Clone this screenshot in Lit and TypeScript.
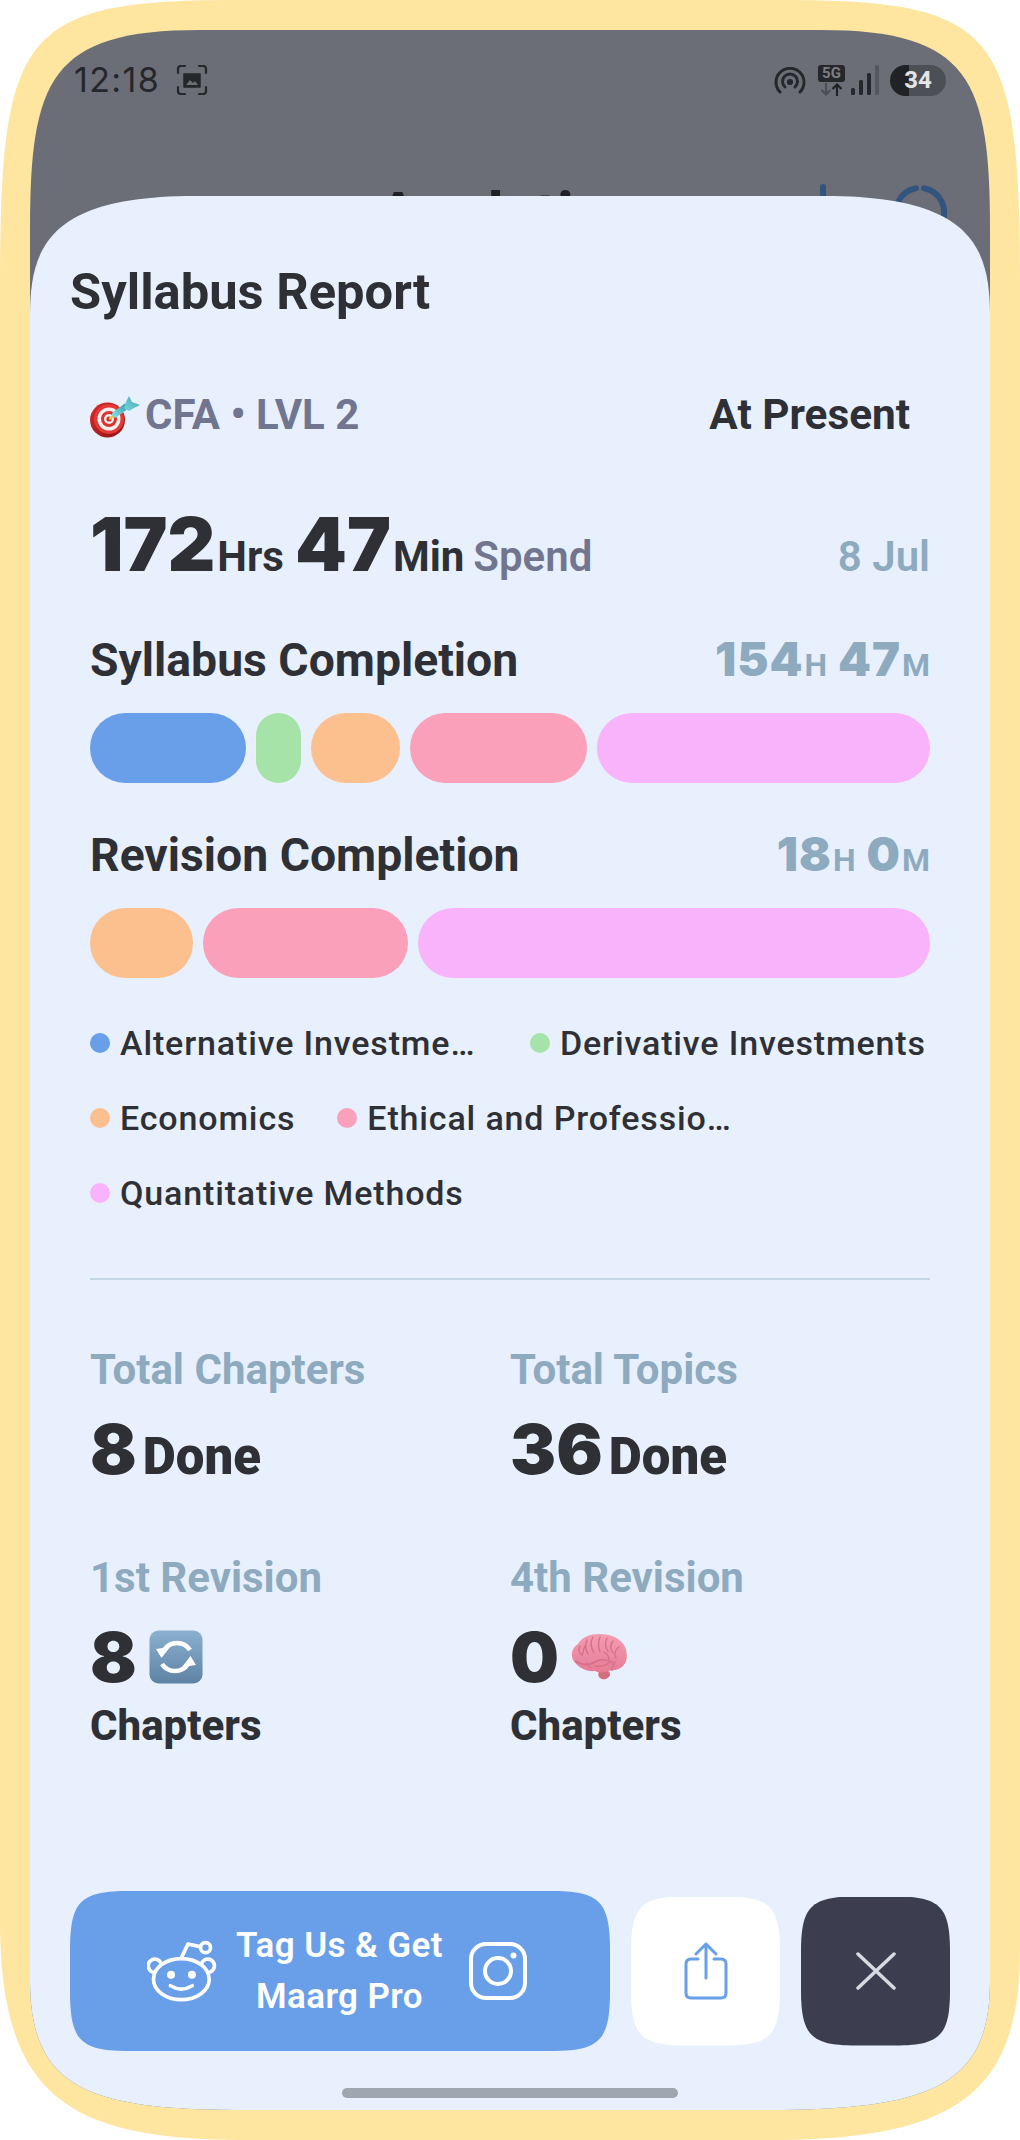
import { LitElement, html, css, svg } from 'lit';
import { customElement } from 'lit/decorators.js';
import { classMap } from 'lit/directives/class-map.js';

const syllabus = [
    { w: 156, c: '#699ee8' },
    { w: 45, c: '#a6e3a9' },
    { w: 89, c: '#fcc08f' },
    { w: 178, c: '#fba0ba' },
    { w: 333, c: '#f8b3fb' },
];

const revision = [
    { w: 103, c: '#fcc08f' },
    { w: 205, c: '#fba0ba' },
    { w: 512, c: '#f8b3fb' },
];

const legend = [
    { c: '#699ee8', t: 'Alternative Investme…', cut: true },
    { c: '#a6e3a9', t: 'Derivative Investments', cut: false },
    { c: '#fcc08f', t: 'Economics', cut: false },
    { c: '#fba0ba', t: 'Ethical and Professio…', cut: true },
    { c: '#f8b3fb', t: 'Quantitative Methods', cut: false },
];

const target = svg`<svg class="target" viewBox="0 0 52 44">
    <defs>
        <linearGradient id="rim" x1="0" y1="0" x2="1" y2="1"><stop offset="0" stop-color="#d92b2b"/><stop offset="1" stop-color="#8f1414"/></linearGradient>
        <linearGradient id="fin" x1="0" y1="1" x2="1" y2="0"><stop offset="0" stop-color="#7fd6dc"/><stop offset="1" stop-color="#3aa5b3"/></linearGradient>
    </defs>
    <ellipse cx="18.5" cy="25" rx="17.5" ry="17.5" fill="url(#rim)"/>
    <ellipse cx="20" cy="24" rx="15" ry="15" fill="#e23a36"/>
    <ellipse cx="20" cy="24" rx="11.5" ry="11.5" fill="#fbeeee"/>
    <ellipse cx="20" cy="24" rx="8" ry="8" fill="#dc3330"/>
    <ellipse cx="20" cy="24" rx="5" ry="5" fill="#fbeeee"/>
    <ellipse cx="20" cy="24" rx="2.6" ry="2.6" fill="#d22c2a"/>
    <path d="M21 23.5l5-4" stroke="#e9c84a" stroke-width="2.4" stroke-linecap="round"/>
    <path d="M26 19.500l11-8" stroke="url(#fin)" stroke-width="6" stroke-linecap="round"/>
    <path d="M35 13l2-6 3-6 3 6 8 3-6 3-5 3z" fill="url(#fin)"/>
</svg>`;

const repeat = svg`<svg class="emoji-repeat" viewBox="0 0 54 54">
    <defs>
        <linearGradient id="tile" x1="0" y1="0" x2="0" y2="1"><stop offset="0" stop-color="#8bb0d0"/><stop offset="1" stop-color="#5e82a3"/></linearGradient>
    </defs>
    <rect x=".5" y=".5" width="53" height="53" rx="9" fill="url(#tile)"/>
    <path d="M15 20A15.500 15.500 0 0 1 41 20" fill="none" stroke="#fff" stroke-width="4.500"/>
    <path d="M39 34A15.500 15.500 0 0 1 13 34" fill="none" stroke="#fff" stroke-width="4.500"/>
    <path d="M7 19l14-2-8.500 11z" fill="#fff"/>
    <path d="M47 35l-14 2 8.500-11z" fill="#fff"/>
</svg>`;

const brain = svg`<svg class="emoji-brain" viewBox="0 0 56 46">
    <defs>
        <linearGradient id="pink" x1="0" y1="0" x2="0" y2="1"><stop offset="0" stop-color="#f59db0"/><stop offset="1" stop-color="#e57c95"/></linearGradient>
    </defs>
    <path d="M30 36c4 0 9 0 9 4 0 4-5 6-8 5-3-1-5-4-3-7z" fill="#d0707f"/>
    <path d="M2 26C-1 20 2 13 7 10 11 3 19 0 28 0c10 0 20 3 25 11 4 8 4 16-1 21-5 5-11 4-15 5-5 2-9 2-13 0-8 1-17-3-22-11z" fill="url(#pink)"/>
    <path d="M4 27c8 5 15 4 20 1 5-3 12-3 18 1" fill="none" stroke="#d8708a" stroke-width="1.800"/>
    <path d="M9 12c-2 4-1 7 2 9 2-3 1-6 3-9M16 6c-2 5-2 9 1 14M22 3c-3 5-2 11 1 16M29 3c-2 5-2 10 0 15M36 4c-2 4-2 9 1 13M42 7c-3 4-3 8 0 12M48 13c-4 3-5 7-3 11M33 18c3 2 5 4 5 7M24 32c5 1 10 0 14-3M44 28c-2 3-3 5-3 8M15 29c1 2 2 4 5 5" fill="none" stroke="#d8708a" stroke-width="1.400" stroke-linecap="round"/>
</svg>`;

@customElement('app-root')
export class AppRoot extends LitElement {
    bar(items: { w: number; c: string }[]) {
        return html`<div class="bar">
            ${items.map(i => html`<span class="seg" style="flex:${i.w} 1 0;background:${i.c}"></span>`)}
        </div>`;
    }

    statusBar() {
        return html`<div class="status">
            <div class="status-left">
                <span class="time">12:18</span>
                <svg class="shot" viewBox="0 0 32 30" fill="none" stroke="#25272b" stroke-width="2.2" stroke-linecap="round">
                    <path d="M2 8V4q0-3 3-3h4M23 1h4q3 0 3 3v4M30 22v4q0 3-3 3h-4M9 29H5q-3 0-3-3v-4"/>
                    <path d="M8 9h16v13H8z" fill="#25272b" stroke-width="1.5" stroke-linejoin="round"/>
                    <path d="M10 20l4-5 3 3 2-2 3 4z" fill="#6b6e76" stroke="none"/>
                </svg>
            </div>
            <div class="status-right">
                <svg class="hotspot" viewBox="0 0 32 27" fill="none" stroke="#25272b" stroke-width="3" stroke-linecap="round">
                    <path d="M6 25A14 14 0 1 1 26 25"/>
                    <path d="M11 20A7.5 7.5 0 1 1 21 20"/>
                    <circle cx="16" cy="15" r="1.6" fill="#25272b"/>
                </svg>
                <div class="net">
                    <span class="badge">5G</span>
                    <svg class="arrows" viewBox="0 0 27 13" fill="none" stroke-width="2.2">
                        <path d="M8 0v11M3.5 7L8 11.5 12.500 7" stroke="#4b4e54"/>
                        <path d="M19 13V2M14.500 6L19 1.500 23.500 6" stroke="#202225"/>
                    </svg>
                </div>
                <svg class="signal" viewBox="0 0 28 30">
                    <rect x="0" y="23" width="4" height="7" rx="1.500" fill="#25272b"/>
                    <rect x="8" y="15" width="4" height="15" rx="1.500" fill="#25272b"/>
                    <rect x="16" y="8" width="4" height="22" rx="1.500" fill="#25272b"/>
                    <rect x="24" y="0" width="4" height="30" rx="1.500" fill="#54575d"/>
                </svg>
                <div class="battery"><span>34</span></div>
            </div>
        </div>`;
    }

    render() {
        return html`
            <div class="frame">
                <div class="screen">
                    ${this.statusBar()}
                    <div class="behind">
                        <span class="behind-title">Analytics</span>
                        <span class="behind-line"></span>
                        <svg class="behind-ring" viewBox="0 0 60 60" fill="none" stroke="#33547f" stroke-width="6" stroke-linecap="round">
                            <path d="M34 6.300A24 24 0 1 1 26 6.300"/>
                        </svg>
                    </div>

                    <div class="sheet">
                        <h1 class="title">Syllabus Report</h1>

                        <div class="row course">
                            <div class="course-name">${target}<span>CFA • LVL 2</span></div>
                            <span class="present">At Present</span>
                        </div>

                        <div class="row spend">
                            <div class="spend-time">
                                <b class="big">172</b><b class="unit">Hrs</b>
                                <b class="big gap">47</b><b class="unit">Min</b>
                                <span class="spend-word">Spend</span>
                            </div>
                            <span class="date">8 Jul</span>
                        </div>

                        <div class="row heading first">
                            <h2>Syllabus Completion</h2>
                            <div class="sum"><b>154</b><i>H</i><b class="gap">47</b><i>M</i></div>
                        </div>
                        ${this.bar(syllabus)}

                        <div class="row heading second">
                            <h2>Revision Completion</h2>
                            <div class="sum"><b>18</b><i>H</i><b class="gap">0</b><i>M</i></div>
                        </div>
                        ${this.bar(revision)}

                        <div class="legend">
                            ${legend.map(l => html`<div class="legend-item">
                                <span class="dot" style="background:${l.c}"></span>
                                <span class=${classMap({ 'legend-text': true, cut: l.cut })}>${l.t}</span>
                            </div>`)}
                        </div>

                        <div class="divider"></div>

                        <div class="stats">
                            <div class="stat">
                                <div class="stat-label">Total Chapters</div>
                                <div class="stat-value"><b>8</b><span>Done</span></div>
                            </div>
                            <div class="stat">
                                <div class="stat-label">Total Topics</div>
                                <div class="stat-value"><b>36</b><span>Done</span></div>
                            </div>
                            <div class="stat">
                                <div class="stat-label">1st Revision</div>
                                <div class="stat-value"><b>8</b>${repeat}</div>
                                <div class="stat-sub">Chapters</div>
                            </div>
                            <div class="stat">
                                <div class="stat-label">4th Revision</div>
                                <div class="stat-value"><b>0</b>${brain}</div>
                                <div class="stat-sub">Chapters</div>
                            </div>
                        </div>

                        <div class="footer">
                            <div class="btn tag">
                                <svg class="reddit" viewBox="50 60 210 190" fill="none" stroke="#fff" stroke-width="11" stroke-linecap="round" stroke-linejoin="round">
                                    <ellipse cx="153" cy="178" rx="84" ry="62"/>
                                    <path d="M92 131a20 20 0 1 0-27 25"/>
                                    <path d="M214 131a20 20 0 1 1 27 25"/>
                                    <circle cx="122" cy="165" r="12" fill="#fff" stroke="none"/>
                                    <circle cx="185" cy="165" r="12" fill="#fff" stroke="none"/>
                                    <path d="M120 198q33 20 66 0"/>
                                    <path d="M153 114l20-42 36 8"/>
                                    <circle cx="226" cy="83" r="15"/>
                                </svg>
                                <div class="tag-text">Tag Us &amp; Get<br>Maarg Pro</div>
                                <svg class="insta" viewBox="0 0 58 58" fill="none" stroke="#fff" stroke-width="4">
                                    <rect x="2" y="2" width="54" height="54" rx="15"/>
                                    <circle cx="29" cy="29" r="13"/>
                                    <circle cx="44.500" cy="13.500" r="3" fill="#fff" stroke="none"/>
                                </svg>
                            </div>
                            <div class="btn square white">
                                <svg class="share" viewBox="0 0 44 58" fill="none" stroke="#699ee8" stroke-width="3" stroke-linecap="round" stroke-linejoin="round">
                                    <path d="M22 2v34M12 12L22 2l10 10"/>
                                    <path d="M14 17H7q-5 0-5 5v29q0 5 5 5h30q5 0 5-5V22q0-5-5-5h-7"/>
                                </svg>
                            </div>
                            <div class="btn square dark">
                                <svg class="close" viewBox="0 0 40 38" fill="none" stroke="#d6dbe2" stroke-width="3.500" stroke-linecap="round">
                                    <path d="M2 2l36 34M38 2L2 36"/>
                                </svg>
                            </div>
                        </div>
                        <div class="home"></div>
                    </div>
                </div>
            </div>
        `;
    }

    static styles = css`
        :host {
            display: block;
            width: 1020px;
            height: 2140px;
            background: #fff;
            font-family: Roboto, "Noto Sans", sans-serif;
            color: #2e3035;
        }

        h1, h2 { margin: 0; }
        b { font-weight: inherit; }
        i { font-style: normal; }

        /* the phone corners are squircles, border-radius can't do them */
        .frame {
            box-sizing: border-box;
            height: 100%;
            padding: 30px;
            background: #fee6a0;
            clip-path: path('M0 290C0 30 20 0 240 0H780C1000 0 1020 30 1020 290V1950C1020 2090 960 2140 770 2140H250C70 2140 0 2100 0 1920Z');
        }

        .screen {
            position: relative;
            height: 100%;
            overflow: hidden;
            background: #6b6e76;
            clip-path: path('M0 200C0 50 20 0 170 0H790C940 0 960 50 960 200V1950C960 2050 910 2080 740 2080H216C60 2080 0 2060 0 1950Z');
        }

        /* status bar */
        .status {
            display: flex;
            justify-content: space-between;
            align-items: center;
            height: 32px;
            padding: 34px 44px 0 44px;
            color: #25272b;
        }

        .status-left, .status-right { display: flex; align-items: center; }
        .time { font-family: Inter, sans-serif; font-size: 34px; line-height: 32px; letter-spacing: 1.4px; }
        .shot { width: 32px; height: 30px; margin-left: 16px; }
        .hotspot { width: 32px; height: 27px; }
        .net { display: flex; flex-direction: column; align-items: center; margin-left: 12px; }
        .badge {
            width: 27px;
            height: 17px;
            border-radius: 3px;
            background: #25272b;
            color: #7b7e85;
            font-size: 15px;
            font-weight: 700;
            line-height: 17px;
            text-align: center;
        }
        .arrows { width: 27px; height: 13px; margin-top: 1px; }
        .signal { width: 28px; height: 30px; margin-left: 6px; }
        .battery {
            width: 56px;
            height: 31px;
            margin-left: 11px;
            border-radius: 16px;
            background: linear-gradient(90deg, #202225 0 19px, #4c4f55 19px);
            color: #e4e5e7;
            font-size: 24px;
            font-weight: 700;
            line-height: 31px;
            text-align: center;
        }

        /* page behind the sheet */
        .behind { position: relative; height: 80px; margin-top: 85px; }
        .behind-title {
            position: absolute;
            left: 347px;
            top: -1px;
            color: #1f2024;
            font-size: 63px;
            font-weight: 700;
            line-height: 72px;
        }
        .behind-line { position: absolute; left: 790px; top: 3px; width: 6px; height: 40px; border-radius: 3px; background: #33547f; }
        .behind-ring { position: absolute; left: 860px; top: 1px; width: 60px; height: 60px; }

        /* sheet */
        .sheet {
            position: absolute;
            inset: 166px 0 0 0;
            display: flex;
            flex-direction: column;
            box-sizing: border-box;
            padding: 0 60px;
            background: #e8f0fd;
            clip-path: path('M0 120C0 50 20 0 165 0H795C940 0 960 50 960 120V1914H0Z');
        }

        .title { margin: 66px 0 0 -20px; font-size: 50.700px; font-weight: 700; line-height: 60px; }
        .row { display: flex; justify-content: space-between; align-items: baseline; }

        .course { margin-top: 62px; align-items: center; height: 60px; padding-right: 20px; }
        .course-name { display: flex; align-items: center; color: #71758f; font-size: 42px; font-weight: 700; }
        .target { width: 52px; height: 44px; margin: 6px 4px 0 -1px; }
        .present { font-size: 42.300px; font-weight: 700; }

        .spend { margin-top: 60px; height: 80px; }
        .spend-time { display: flex; align-items: baseline; }
        .big { font-family: Inter, sans-serif; font-size: 74px; font-weight: 900; line-height: 80px; }
        .unit { margin-left: 2px; font-size: 42px; font-weight: 700; }
        .big.gap { margin-left: 11px; }
        .spend-word { margin-left: 9px; color: #71758f; font-size: 42px; font-weight: 600; }
        .date { color: #8eaabf; font-size: 42px; font-weight: 600; }

        .heading { height: 60px; }
        .heading.first { margin-top: 46px; }
        .heading.second { margin-top: 42px; }
        h2 { font-size: 46.300px; font-weight: 700; line-height: 60px; }
        .sum { display: flex; align-items: baseline; color: #8eaabf; }
        .sum b { font-family: Inter, sans-serif; font-size: 47px; font-weight: 900; letter-spacing: 1px; }
        .sum b.gap { margin-left: 11px; }
        .sum i { margin-left: 1px; font-size: 32px; font-weight: 700; }

        .bar { display: flex; gap: 10px; height: 70px; margin-top: 23px; }
        .seg { border-radius: 35px; min-width: 0; }

        .legend { display: flex; flex-wrap: wrap; gap: 35px 42px; margin-top: 45px; }
        .legend-item { display: flex; align-items: center; height: 40px; }
        .dot { flex: none; width: 20px; height: 20px; border-radius: 50%; margin-right: 10px; }
        .legend-text {
            font-size: 34px;
            font-weight: 500;
            letter-spacing: .85px;
            white-space: nowrap;
        }
        .legend-text.cut { width: 368px; }

        .divider { height: 2px; margin-top: 65px; background: #c5d5e8; }

        .stats { display: grid; grid-template-columns: 420px 1fr; row-gap: 69px; margin-top: 65px; }
        .stat-label { color: #8eaabf; font-size: 42px; font-weight: 700; line-height: 50px; }
        .stat-value { display: flex; align-items: baseline; height: 70px; margin-top: 19px; }
        .stat-value b { font-family: Inter, sans-serif; font-size: 69px; font-weight: 900; line-height: 70px; }
        .stat-value span { margin-left: 6px; font-size: 51px; font-weight: 900; }
        .emoji-repeat { align-self: center; width: 54px; height: 54px; margin-left: 12px; }
        .emoji-brain { align-self: center; width: 56px; height: 46px; margin-left: 12px; }
        .stat-sub { margin-top: 9px; font-size: 42px; font-weight: 800; line-height: 50px; }

        .footer {
            display: flex;
            align-items: center;
            gap: 21px;
            margin: auto -20px 0;
        }
        .btn { display: flex; align-items: center; justify-content: center; }
        .tag {
            flex: none;
            box-sizing: border-box;
            width: 540px;
            height: 160px;
            padding-right: 6px;
            background: #699ee8;
            color: #fff;
            clip-path: path('M0 60C0 10 10 0 60 0H480C530 0 540 10 540 60V100C540 150 530 160 480 160H60C10 160 0 150 0 100Z');
        }
        .reddit { width: 70px; height: 63px; }
        .tag-text { margin: 0 26px 0 19px; font-size: 35px; font-weight: 600; line-height: 51px; letter-spacing: .4px; text-align: center; }
        .insta { width: 58px; height: 58px; }
        .square {
            flex: none;
            width: 149px;
            height: 149px;
            clip-path: path('M0 55C0 10 10 0 55 0H94C139 0 149 10 149 55V94C149 139 139 149 94 149H55C10 149 0 139 0 94Z');
        }
        .white { background: #fff; }
        .dark { background: #3c3d4f; }
        .share { width: 44px; height: 58px; }
        .close { width: 40px; height: 38px; }

        .home {
            flex: none;
            align-self: center;
            width: 336px;
            height: 10px;
            margin: 37px 0 12px;
            border-radius: 5px;
            background: #9fa6b0;
        }
    `;
}
